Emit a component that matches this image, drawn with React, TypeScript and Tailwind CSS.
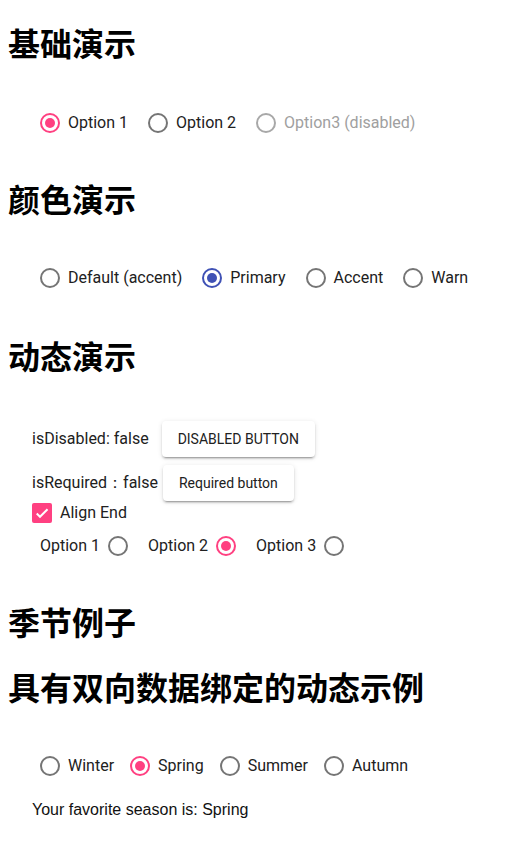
import React from "react";

const ROBOTO = "font-['Roboto','Liberation_Sans',sans-serif]";

function Radio({
  label,
  checked = false,
  disabled = false,
  color = "pink",
  before = false,
  mr = "mr-5",
}: {
  label: string;
  checked?: boolean;
  disabled?: boolean;
  color?: "pink" | "blue";
  before?: boolean;
  mr?: string;
}) {
  const ring = disabled
    ? "border-[#a8a8a8]"
    : checked
    ? color === "blue"
      ? "border-[#3f51b5]"
      : "border-[#ff4081]"
    : "border-[#757575]";
  const dot = color === "blue" ? "bg-[#3f51b5]" : "bg-[#ff4081]";
  const circle = (
    <span
      className={`flex h-5 w-5 shrink-0 items-center justify-center rounded-full border-2 ${ring}`}
    >
      {checked && <span className={`h-2.5 w-2.5 rounded-full ${dot}`} />}
    </span>
  );
  const text = (
    <span
      className={`text-[16px] leading-5 ${ROBOTO} ${
        disabled ? "text-[#a0a0a0]" : "text-[#212121]"
      } ${before ? "mr-2" : "ml-2"}`}
    >
      {label}
    </span>
  );
  return (
    <label className={`flex h-5 items-center ${mr}`}>
      {before ? (
        <>
          {text}
          {circle}
        </>
      ) : (
        <>
          {circle}
          {text}
        </>
      )}
    </label>
  );
}

function H1({ children, mt }: { children: React.ReactNode; mt: string }) {
  return (
    <h1
      className={`${mt} text-[32px] leading-[44px] font-bold text-black font-['Noto_Sans_CJK_SC','Noto_Sans',sans-serif] whitespace-nowrap`}
    >
      {children}
    </h1>
  );
}

function RaisedButton({ children }: { children: React.ReactNode }) {
  return (
    <button
      className={`h-9 rounded-[4px] bg-white px-4 text-[14px] font-normal text-[#212121] ${ROBOTO} shadow-[0_3px_1px_-2px_rgba(0,0,0,0.2),0_2px_2px_0_rgba(0,0,0,0.14),0_1px_5px_0_rgba(0,0,0,0.12)]`}
    >
      {children}
    </button>
  );
}

export default function App() {
  return (
    <div className="min-h-[859px] w-[526px] bg-white pl-2 pb-8 font-['Liberation_Sans',Arial,sans-serif]">
      <H1 mt="mt-[20px]">基础演示</H1>
      <div className="mt-[49px] flex items-center pl-8">
        <Radio label="Option 1" checked />
        <Radio label="Option 2" />
        <Radio label="Option3 (disabled)" disabled />
      </div>

      <H1 mt="mt-[43px]">颜色演示</H1>
      <div className="mt-[48px] flex items-center pl-8">
        <Radio label="Default (accent)" />
        <Radio label="Primary" checked color="blue" />
        <Radio label="Accent" />
        <Radio label="Warn" />
      </div>

      <H1 mt="mt-[45px]">动态演示</H1>
      <div className="mt-[44px] flex h-9 items-center pl-6">
        <span className={`text-[16px] text-[#212121] ${ROBOTO}`}>isDisabled: false</span>
        <span className="ml-[13px]">
          <RaisedButton>DISABLED BUTTON</RaisedButton>
        </span>
      </div>
      <div className="mt-2 flex h-9 items-center pl-6">
        <span className={`text-[16px] text-[#212121] ${ROBOTO}`}>isRequired：false</span>
        <span className="ml-[5px]">
          <RaisedButton>Required button</RaisedButton>
        </span>
      </div>
      <div className="mt-[2px] flex h-5 items-center pl-6">
        <span className="flex h-5 w-5 items-center justify-center rounded-[2px] bg-[#ff4081]">
          <svg width="16" height="16" viewBox="0 0 24 24" fill="none">
            <path d="M4.1 12.7 9 17.6 20.3 6.3" stroke="white" strokeWidth="3" />
          </svg>
        </span>
        <span className={`ml-2 text-[16px] leading-5 text-[#212121] ${ROBOTO}`}>Align End</span>
      </div>
      <div className="mt-[13px] flex items-center pl-8">
        <Radio label="Option 1" before />
        <Radio label="Option 2" before checked />
        <Radio label="Option 3" before />
      </div>

      <H1 mt="mt-[43px]">季节例子</H1>
      <H1 mt="mt-[21px]">具有双向数据绑定的动态示例</H1>
      <div className="mt-[48px] flex items-center pl-8">
        <Radio label="Winter" mr="mr-4" />
        <Radio label="Spring" checked mr="mr-4" />
        <Radio label="Summer" mr="mr-4" />
        <Radio label="Autumn" mr="mr-4" />
      </div>
      <div className="mt-[24px] pl-6 text-[16px] leading-5 text-[#111]">
        Your favorite season is: Spring
      </div>
    </div>
  );
}
